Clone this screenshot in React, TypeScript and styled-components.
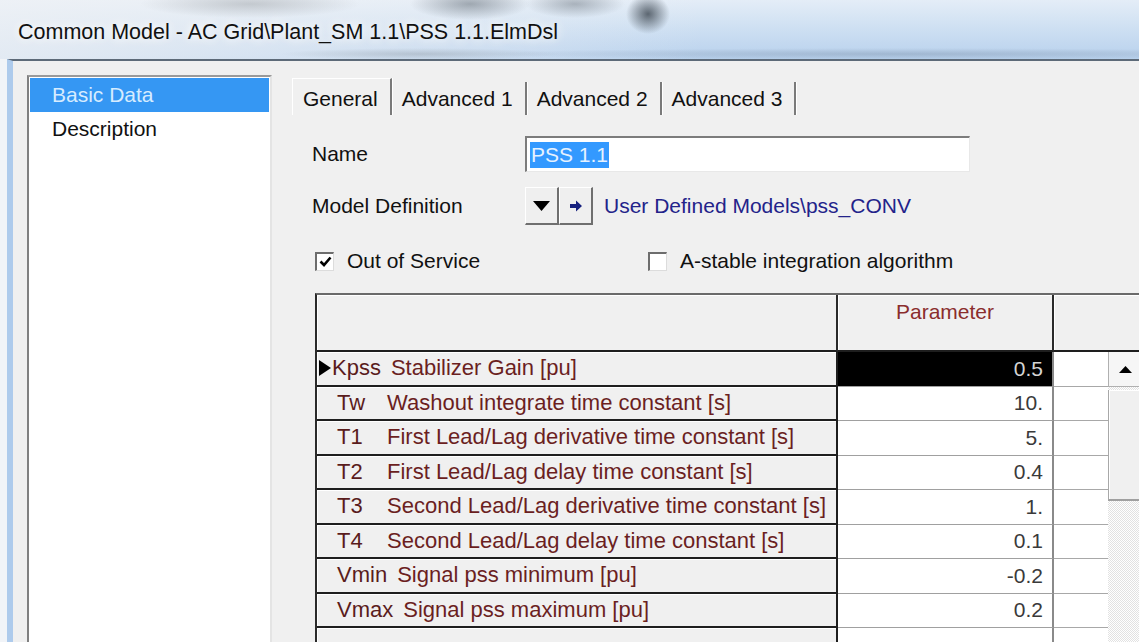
import React from 'react';
import styled, { createGlobalStyle, css } from 'styled-components';

const GlobalStyle = createGlobalStyle`
  html, body {
    margin: 0;
    padding: 0;
    background: #eef2f7;
  }
  body {
    font-family: "Liberation Sans", Arial, sans-serif;
    overflow: hidden;
  }
`;

const Window = styled.div`
  width: 1139px;
  height: 642px;
  overflow: hidden;
  display: flex;
  flex-direction: column;
  background: #f1f4f8;
`;

// Aero glass caption with the blurred desktop behind it
const TitleBar = styled.div`
  height: 59px;
  flex: none;
  display: flex;
  align-items: center;
  padding: 6px 0 0 18px;
  box-sizing: border-box;
  font-size: 21.5px;
  color: #111;
  text-shadow: 0 0 8px #fff, 0 0 14px rgba(255, 255, 255, 0.85);
  white-space: nowrap;
  background:
    radial-gradient(ellipse 22px 20px at 648px 14px, rgba(60, 70, 80, 0.8), rgba(60, 70, 80, 0) 100%),
    radial-gradient(ellipse 60px 16px at 470px 4px, rgba(100, 110, 120, 0.55), rgba(100, 110, 120, 0) 100%),
    radial-gradient(ellipse 50px 14px at 575px 4px, rgba(110, 120, 130, 0.5), rgba(110, 120, 130, 0) 100%),
    radial-gradient(ellipse 110px 14px at 250px 4px, rgba(150, 155, 160, 0.45), rgba(150, 155, 160, 0) 100%),
    radial-gradient(ellipse 140px 6px at 420px 54px, rgba(130, 140, 150, 0.35), rgba(130, 140, 150, 0) 100%),
    radial-gradient(ellipse 420px 6px at 900px 54px, rgba(110, 130, 155, 0.35), rgba(110, 130, 155, 0) 100%),
    linear-gradient(to right, rgba(240, 242, 245, 0.75) 0%, rgba(240, 242, 245, 0.35) 40%, rgba(255, 255, 255, 0) 62%),
    linear-gradient(to bottom, #e4edf7 0%, #cddff2 50%, #b8d1ed 100%);
`;

const Frame = styled.div`
  flex: 1;
  display: flex;
  padding-left: 7px;
  min-height: 0;
`;

const Client = styled.div`
  flex: 1;
  display: flex;
  background: #f0f0f0;
  border-left: 6px solid #aecbec;
  border-top: 2px solid #5d6a78;
  padding: 14px 0 0 14px;
  min-width: 0;
`;

const Sidebar = styled.div`
  width: 239px;
  flex: none;
  background: #fff;
  border-left: 2px solid #808080;
  border-top: 2px solid #9a9a9a;
  border-right: 2px solid #e4e4e4;
  padding: 1px;
  box-sizing: content-box;
`;

const NavItem = styled.div<{ $active?: boolean }>`
  height: 34px;
  display: flex;
  align-items: center;
  padding-left: 22px;
  font-size: 21px;
  color: #111;
  ${p => p.$active && css`
    background: #3597f3;
    color: #d6ecff;
  `}
`;

const Main = styled.div`
  flex: 1;
  min-width: 0;
  display: flex;
  flex-direction: column;
  padding-left: 20px;
`;

const TabStrip = styled.div`
  display: flex;
  align-items: flex-end;
  margin-top: 3px;
  height: 37px;
`;

const Tab = styled.div<{ $active?: boolean }>`
  height: 33px;
  display: flex;
  align-items: center;
  padding: 0 12px 0 10px;
  font-size: 21px;
  color: #111;
  border-right: 2px solid #7a7a7a;
  box-shadow: 1px 0 0 #fff;
  ${p => p.$active && css`
    height: 37px;
    border-left: 1px solid #fff;
    border-top: 1px solid #fff;
    padding-top: 3px;
    box-sizing: border-box;
  `}
`;

const Form = styled.div`
  display: flex;
  flex-direction: column;
  padding-left: 20px;
`;

const FieldRow = styled.div<{ $top: number }>`
  display: flex;
  align-items: center;
  margin-top: ${p => p.$top}px;
`;

const Label = styled.div`
  width: 213px;
  flex: none;
  font-size: 21px;
  color: #111;
`;

const TextBox = styled.div`
  width: 445px;
  height: 36px;
  box-sizing: border-box;
  background: #fff;
  border-top: 2px solid #7c7c7c;
  border-left: 2px solid #7c7c7c;
  border-right: 1px solid #e8e8e8;
  border-bottom: 1px solid #e8e8e8;
  display: flex;
  align-items: center;
  padding-left: 3px;
  font-size: 21px;
`;

const Selection = styled.span`
  background: #3399ff;
  color: #e6f2ff;
  padding: 1px 1px;
`;

const ToolButton = styled.div`
  width: 34px;
  height: 38px;
  box-sizing: border-box;
  background: #efefef;
  border-top: 1px solid #fff;
  border-left: 1px solid #fff;
  border-right: 2px solid #6f6f6f;
  border-bottom: 2px solid #6f6f6f;
  display: flex;
  align-items: center;
  justify-content: center;
`;

const LinkText = styled.span`
  margin-left: 11px;
  font-size: 21px;
  color: #23238a;
`;

const CheckRow = styled.div`
  display: flex;
  align-items: center;
  margin-top: 24px;
  padding-left: 3px;
`;

const CheckItem = styled.label<{ $width?: number }>`
  display: flex;
  align-items: center;
  gap: 13px;
  font-size: 21px;
  color: #111;
  ${p => p.$width && css`width: ${p.$width}px;`}
`;

const Box = styled.span`
  width: 19px;
  height: 19px;
  box-sizing: border-box;
  background: #fff;
  border-top: 2px solid #6d6d6d;
  border-left: 2px solid #6d6d6d;
  border-right: 1px solid #dcdcdc;
  border-bottom: 1px solid #dcdcdc;
  display: flex;
  align-items: center;
  justify-content: center;
`;

// Parameter grid
const Table = styled.div`
  margin: 20px 0 0 3px;
  width: 826px;
  display: flex;
  flex-direction: column;
  border-left: 2px solid #2a2a2a;
  border-top: 2px solid #6a6a6a;
`;

const HeaderRow = styled.div`
  display: grid;
  grid-template-columns: 521px 216px 1fr;
  height: 57px;
`;

const HeadCell = styled.div<{ $last?: boolean }>`
  background: #f0f0f0;
  border-bottom: 2px solid #1e1e1e;
  border-right: ${p => (p.$last ? 'none' : '2px solid #2a2a2a')};
  box-shadow: inset 1px 1px 0 #fff;
  display: flex;
  justify-content: center;
  padding-top: 5px;
  font-size: 21px;
  color: #8a2d2d;
`;

const Body = styled.div`
  display: flex;
`;

const Rows = styled.div`
  display: flex;
  flex-direction: column;
`;

const Row = styled.div`
  display: grid;
  grid-template-columns: 521px 216px 54px;
  height: 34.5px;
`;

const NameCell = styled.div`
  background: #f0f0f0;
  border-bottom: 2px solid #1e1e1e;
  border-right: 2px solid #1e1e1e;
  box-shadow: inset 1px 1px 0 #fff;
  display: flex;
  align-items: center;
  white-space: nowrap;
  overflow: hidden;
  font-size: 22px;
  color: #6b1f1f;
`;

const Pointer = styled.span<{ $active?: boolean }>`
  width: ${p => (p.$active ? 15 : 20)}px;
  flex: none;
  display: flex;
  justify-content: flex-start;
  padding-left: 2px;
  box-sizing: border-box;
`;

const Symbol = styled.span`
  min-width: 40px;
  flex: none;
  margin-right: 10px;
  color: #5a1c1c;
`;

const ValueCell = styled.div<{ $selected?: boolean }>`
  background: ${p => (p.$selected ? '#000' : '#fff')};
  color: ${p => (p.$selected ? '#d4d4d4' : '#3a3a3a')};
  border-bottom: 1px solid #a0a0a0;
  border-right: 2px solid #8a8a8a;
  display: flex;
  align-items: center;
  justify-content: flex-end;
  padding-right: 9px;
  font-size: 21px;
`;

const ExtraCell = styled.div`
  background: #fff;
  border-bottom: 1px solid #a8a8a8;
`;

const ScrollBar = styled.div`
  width: 33px;
  flex: none;
  display: flex;
  flex-direction: column;
  background: repeating-conic-gradient(#ffffff 0 25%, #e2e2e2 0 50%) 0 0 / 2px 2px;
`;

const ScrollButton = styled.div`
  height: 35px;
  box-sizing: border-box;
  background: #f6f6f6;
  border-left: 1px solid #b0b0b0;
  border-bottom: 1px solid #b0b0b0;
  display: flex;
  align-items: center;
  justify-content: center;
`;

const Thumb = styled.div`
  height: 111px;
  margin-top: 3px;
  box-sizing: border-box;
  background: #f0f0f0;
  border-left: 1px solid #a8a8a8;
  border-bottom: 2px solid #a0a0a0;
  box-shadow: inset 1px 1px 0 #fff;
`;

const params = [
  { sym: 'Kpss', text: 'Stabilizer Gain [pu]', value: '0.5' },
  { sym: 'Tw', text: 'Washout integrate time constant [s]', value: '10.' },
  { sym: 'T1', text: 'First Lead/Lag derivative time constant [s]', value: '5.' },
  { sym: 'T2', text: 'First Lead/Lag delay time constant [s]', value: '0.4' },
  { sym: 'T3', text: 'Second Lead/Lag derivative time constant [s]', value: '1.' },
  { sym: 'T4', text: 'Second Lead/Lag delay time constant [s]', value: '0.1' },
  { sym: 'Vmin', text: 'Signal pss minimum [pu]', value: '-0.2' },
  { sym: 'Vmax', text: 'Signal pss maximum [pu]', value: '0.2' },
  { sym: '', text: '', value: '' },
];

const CheckMark = () => (
  <svg width="13" height="13" viewBox="0 0 13 13">
    <path d="M1.5 6.5 L5 10 L11.5 2.5" fill="none" stroke="#000" strokeWidth="2.6" />
  </svg>
);

const App: React.FC = () => {
  return (
    <>
      <GlobalStyle />
      <Window>
        <TitleBar>Common Model - AC Grid\Plant_SM 1.1\PSS 1.1.ElmDsl</TitleBar>
        <Frame>
          <Client>
            <Sidebar>
              <NavItem $active>Basic Data</NavItem>
              <NavItem>Description</NavItem>
            </Sidebar>

            <Main>
              <TabStrip>
                <Tab $active>General</Tab>
                <Tab>Advanced 1</Tab>
                <Tab>Advanced 2</Tab>
                <Tab>Advanced 3</Tab>
              </TabStrip>

              <Form>
                <FieldRow $top={21}>
                  <Label>Name</Label>
                  <TextBox>
                    <Selection>PSS 1.1</Selection>
                  </TextBox>
                </FieldRow>

                <FieldRow $top={15}>
                  <Label>Model Definition</Label>
                  <ToolButton>
                    <svg width="17" height="10" viewBox="0 0 17 10">
                      <polygon points="0,0 17,0 8.5,10" fill="#000" />
                    </svg>
                  </ToolButton>
                  <ToolButton>
                    <svg width="14" height="12" viewBox="0 0 14 12">
                      <path d="M1 4 H7 V0.5 L13 6 L7 11.5 V8 H1 Z" fill="#16207e" />
                    </svg>
                  </ToolButton>
                  <LinkText>User Defined Models\pss_CONV</LinkText>
                </FieldRow>

                <CheckRow>
                  <CheckItem $width={333}>
                    <Box>
                      <CheckMark />
                    </Box>
                    Out of Service
                  </CheckItem>
                  <CheckItem>
                    <Box />
                    A-stable integration algorithm
                  </CheckItem>
                </CheckRow>

                <Table>
                  <HeaderRow>
                    <HeadCell />
                    <HeadCell>Parameter</HeadCell>
                    <HeadCell $last />
                  </HeaderRow>
                  <Body>
                    <Rows>
                      {params.map((p, i) => (
                        <Row key={i}>
                          <NameCell>
                            <Pointer $active={i === 0}>
                              {i === 0 && (
                                <svg width="12" height="16" viewBox="0 0 12 16">
                                  <polygon points="0,0 12,8 0,16" fill="#000" />
                                </svg>
                              )}
                            </Pointer>
                            <Symbol>{p.sym}</Symbol>
                            {p.text}
                          </NameCell>
                          <ValueCell $selected={i === 0}>{p.value}</ValueCell>
                          <ExtraCell />
                        </Row>
                      ))}
                    </Rows>
                    <ScrollBar>
                      <ScrollButton>
                        <svg width="13" height="7" viewBox="0 0 13 7">
                          <polygon points="0,7 13,7 6.5,0" fill="#000" />
                        </svg>
                      </ScrollButton>
                      <Thumb />
                    </ScrollBar>
                  </Body>
                </Table>
              </Form>
            </Main>
          </Client>
        </Frame>
      </Window>
    </>
  );
};

export default App;
